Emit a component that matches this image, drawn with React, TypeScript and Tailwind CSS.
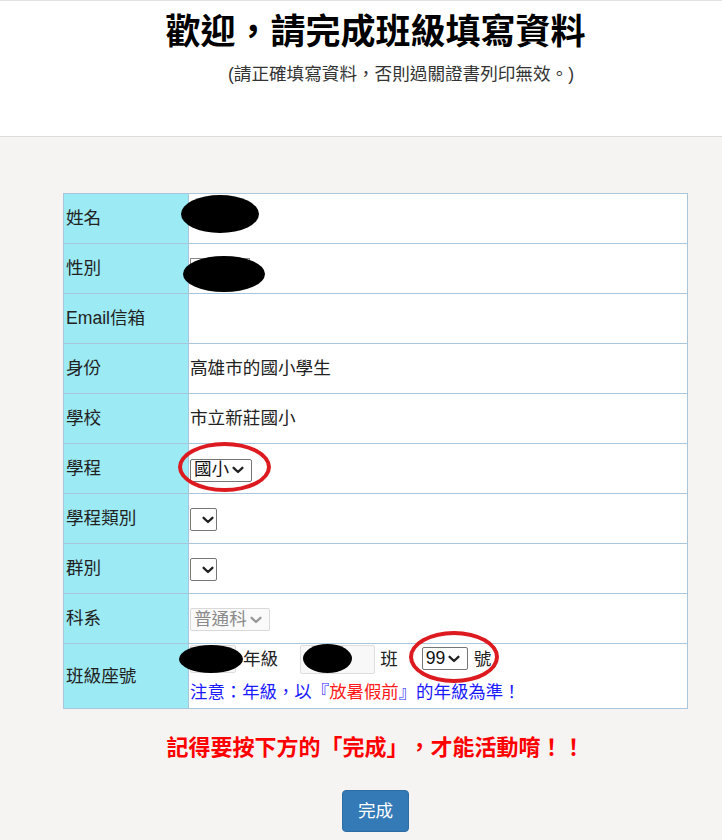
import React from "react";

const FONT = '"Liberation Sans", "Noto Sans CJK TC", sans-serif';

function Chevron({ color = "#222" }: { color?: string }) {
  return (
    <svg width="12" height="8" viewBox="0 0 12 8" className="shrink-0">
      <path d="M1.6 1.8 L6 6 L10.4 1.8" fill="none" stroke={color} strokeWidth="2.3" strokeLinecap="round" strokeLinejoin="round" />
    </svg>
  );
}

function FakeSelect({ text, disabled, className = "" }: { text?: string; disabled?: boolean; className?: string }) {
  return (
    <span
      className={
        "inline-flex items-center h-[23px] rounded-[2px] border pl-[3px] pr-[4px] gap-[3px] align-middle " +
        (disabled ? "border-[#d9d9d9] bg-[#fafafa] text-[#8a8a8a]" : "border-[#767676] bg-white text-[#111]") +
        " " +
        className
      }
    >
      {text ? <span className="leading-none">{text}</span> : <span className="w-[6px]" />}
      <Chevron color={disabled ? "#999" : "#222"} />
    </span>
  );
}

function BlackOval({ className }: { className: string }) {
  return <span className={"absolute bg-black rounded-[50%] " + className} />;
}

function RedRing({ className }: { className: string }) {
  return <span className={"absolute rounded-[50%] border-[4px] border-[#dc1a1f] pointer-events-none " + className} />;
}

const rowLabel = "bg-[#9ceaf4] border border-[#a9c6dc] pl-[2px] text-left align-middle font-normal text-[#222]";
const rowVal = "bg-white border border-[#a9c6dc] pl-[1px] align-middle text-[#222]";

export default function App() {
  return (
    <div className="min-h-[840px] bg-[#f5f4f2] text-[17.6px]" style={{ fontFamily: FONT }}>
      <header className="bg-white border-t border-t-[#e2e2e2] border-b border-b-[#dcdcdc] h-[137px]">
        <div className="ml-[63px] w-[625px] pt-[8px]">
          <h1 className="text-center text-[35px] font-bold leading-[46px] text-black">
            歡迎，請完成班級填寫資料
          </h1>
          <p className="text-center pl-[51px] mt-[6px] text-[17.6px] leading-[26px] text-[#333]">
            (請正確填寫資料，否則過關證書列印無效。)
          </p>
        </div>
      </header>

      <main className="ml-[63px] w-[625px] pt-[56px]">
        <table className="w-[625px] border-collapse border border-[#a9c6dc]">
          <tbody>
            <tr className="h-[50px]">
              <th className={rowLabel + " w-[125px]"}>姓名</th>
              <td className={rowVal}>
                <span className="relative inline-block w-[60px] h-[20px] align-middle">
                  <BlackOval className="-left-[9px] -top-[15px] w-[78px] h-[38px]" />
                </span>
              </td>
            </tr>
            <tr className="h-[50px]">
              <th className={rowLabel}>性別</th>
              <td className={rowVal}>
                <span className="relative inline-block w-[60px] h-[24px] align-middle border border-[#888]">
                  <BlackOval className="-left-[8px] -top-[3px] w-[82px] h-[36px]" />
                </span>
              </td>
            </tr>
            <tr className="h-[50px]">
              <th className={rowLabel}>Email信箱</th>
              <td className={rowVal}></td>
            </tr>
            <tr className="h-[50px]">
              <th className={rowLabel}>身份</th>
              <td className={rowVal}>高雄市的國小學生</td>
            </tr>
            <tr className="h-[50px]">
              <th className={rowLabel}>學校</th>
              <td className={rowVal}>市立新莊國小</td>
            </tr>
            <tr className="h-[50px]">
              <th className={rowLabel}>學程</th>
              <td className={rowVal}>
                <span className="relative inline-block align-middle">
                  <FakeSelect text="國小" className="w-[62px]" />
                  <RedRing className="-left-[12px] -top-[14px] w-[93px] h-[50px]" />
                </span>
              </td>
            </tr>
            <tr className="h-[50px]">
              <th className={rowLabel}>學程類別</th>
              <td className={rowVal}>
                <FakeSelect className="w-[27px] justify-center !px-0" />
              </td>
            </tr>
            <tr className="h-[50px]">
              <th className={rowLabel}>群別</th>
              <td className={rowVal}>
                <FakeSelect className="w-[27px] justify-center !px-0" />
              </td>
            </tr>
            <tr className="h-[50px]">
              <th className={rowLabel}>科系</th>
              <td className={rowVal}>
                <FakeSelect text="普通科" disabled className="w-[80px]" />
              </td>
            </tr>
            <tr className="h-[65px]">
              <th className={rowLabel}>班級座號</th>
              <td className={rowVal + " pt-0"}>
                <div className="flex items-center h-[30px] -mt-[4px]">
                  <span className="relative inline-block w-[46px] h-[28px] border border-[#ddd] bg-[#f8f8f8] rounded-[2px]">
                    <BlackOval className="-left-[12px] -top-[1px] w-[64px] h-[28px]" />
                  </span>
                  <span className="ml-[7px]">年級</span>
                  <span className="relative inline-block ml-[22px] w-[75px] h-[29px] border border-[#dedede] bg-[#f8f8f8] rounded-[2px]">
                    <BlackOval className="left-[2px] -top-[2px] w-[49px] h-[29px]" />
                  </span>
                  <span className="ml-[5px]">班</span>
                  <span className="relative inline-flex items-center ml-[24px]">
                    <FakeSelect text="99" className="w-[46px]" />
                    <span className="ml-[6px]">號</span>
                    <RedRing className="-left-[13px] -top-[15px] w-[90px] h-[52px]" />
                  </span>
                </div>
                <div className="text-[#1a1aff] leading-[24px] mt-[6px] text-[17.4px]">
                  注意：年級，以『<span className="text-[#ff1a1a]">放暑假前</span>』的年級為準！
                </div>
              </td>
            </tr>
          </tbody>
        </table>

        <p className="text-center text-[22px] font-bold text-[#ff0000] mt-[24px] leading-[30px] [text-spacing-trim:space-all]">
          記得要按下方的「完成」，才能活動唷！！
        </p>

        <div className="flex justify-center mt-[27px]">
          <button className="w-[67px] h-[42px] rounded-[4px] bg-[#337ab7] border border-[#2e6da4] text-white text-[17.6px]">
            完成
          </button>
        </div>
      </main>
    </div>
  );
}
